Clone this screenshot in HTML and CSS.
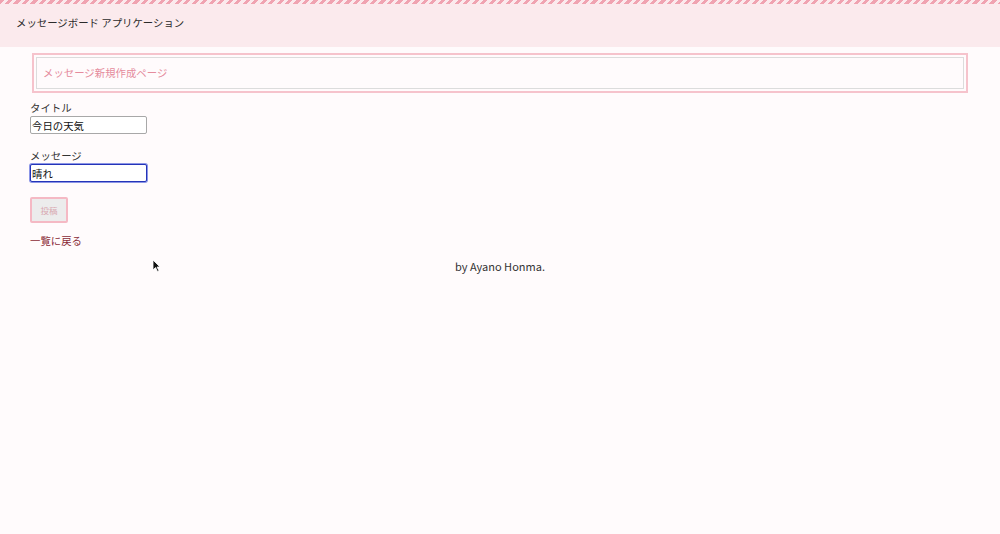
FILE: index.html
```html
<!DOCTYPE html>
<html lang="ja">
<head>
<meta charset="utf-8">
<title>メッセージボード アプリケーション</title>
<link rel="stylesheet" href="styles.css">
</head>
<body>
<header class="site-header">
  <div class="stripe"></div>
  <div class="brand">メッセージボード アプリケーション</div>
</header>
<main class="content">
  <div class="page-title">
    <div class="page-title-inner">メッセージ新規作成ページ</div>
  </div>
  <form class="form">
    <label class="label" for="title">タイトル</label>
    <input class="field" id="title" type="text" value="今日の天気">
    <label class="label label-gap" for="msg">メッセージ</label>
    <input class="field field-focus" id="msg" type="text" value="晴れ">
    <button class="submit" type="button">投稿</button>
  </form>
  <a class="back" href="#">一覧に戻る</a>
</main>
<footer class="footer">by Ayano Honma.</footer>
<svg class="cursor" width="9" height="14" viewBox="0 0 9 14"><path d="M1 1 L1 11 L3.5 8.5 L5.5 12.5 L7 11.8 L5 8 L8 8 Z" fill="#111" stroke="#fff" stroke-width="0.8"/></svg>
</body>
</html>
```
FILE: styles.css
```css
html, body {
  margin: 0;
  padding: 0;
}
body {
  background: #fffbfc;
  font-family: "Noto Sans CJK JP", "Noto Sans", sans-serif;
  color: #333;
  position: relative;
  min-height: 534px;
}
.site-header {
  background: #fbeaed;
  height: 47px;
  display: flex;
  flex-direction: column;
}
.stripe {
  height: 4px;
  background: repeating-linear-gradient(135deg, #f0a3b1 0 3px, #fbeaed 3px 6px);
}
.brand {
  padding-left: 16px;
  font-size: 10.4px;
  line-height: 14px;
  margin-top: 12px;
  color: #2b2b2b;
}
.content {
  padding: 0 30px;
}
.page-title {
  margin: 6px 2px 0;
  border: 2px solid #f6c3cc;
  padding: 2px;
}
.page-title-inner {
  border: 1px solid #dcdcdc;
  height: 30px;
  line-height: 30px;
  padding-left: 6px;
  font-size: 10.4px;
  color: #e58c9d;
}
.form {
  display: flex;
  flex-direction: column;
  align-items: flex-start;
  margin-top: 8px;
}
.label {
  font-size: 10.4px;
  line-height: 14px;
  color: #333;
}
.label-gap {
  margin-top: 15px;
}
.field {
  box-sizing: border-box;
  width: 117px;
  height: 18px;
  margin: 1px 0 0;
  padding: 0 1px;
  border: 1px solid #a8a8a8;
  border-radius: 2px;
  background: #fff;
  font-family: "Noto Sans CJK JP", sans-serif;
  font-size: 10.4px;
  color: #111;
  outline: none;
}
.field-focus {
  border-color: #2434b8;
  box-shadow: 0 0 0 1px #8b95e6;
}
.submit {
  margin-top: 15px;
  box-sizing: border-box;
  width: 38px;
  height: 26px;
  border: 2px solid #f5b9c4;
  border-radius: 2px;
  background: #ececec;
  color: #d8a8b1;
  font-family: "Noto Sans CJK JP", sans-serif;
  font-size: 8.5px;
  padding: 0;
}
.back {
  display: block;
  margin-top: 11px;
  font-size: 10.4px;
  line-height: 14px;
  color: #8a2c38;
  text-decoration: none;
}
.footer {
  margin-top: 11px;
  text-align: center;
  font-size: 11px;
  line-height: 14px;
  color: #333;
}
.cursor {
  position: absolute;
  left: 152px;
  top: 259px;
}
```
